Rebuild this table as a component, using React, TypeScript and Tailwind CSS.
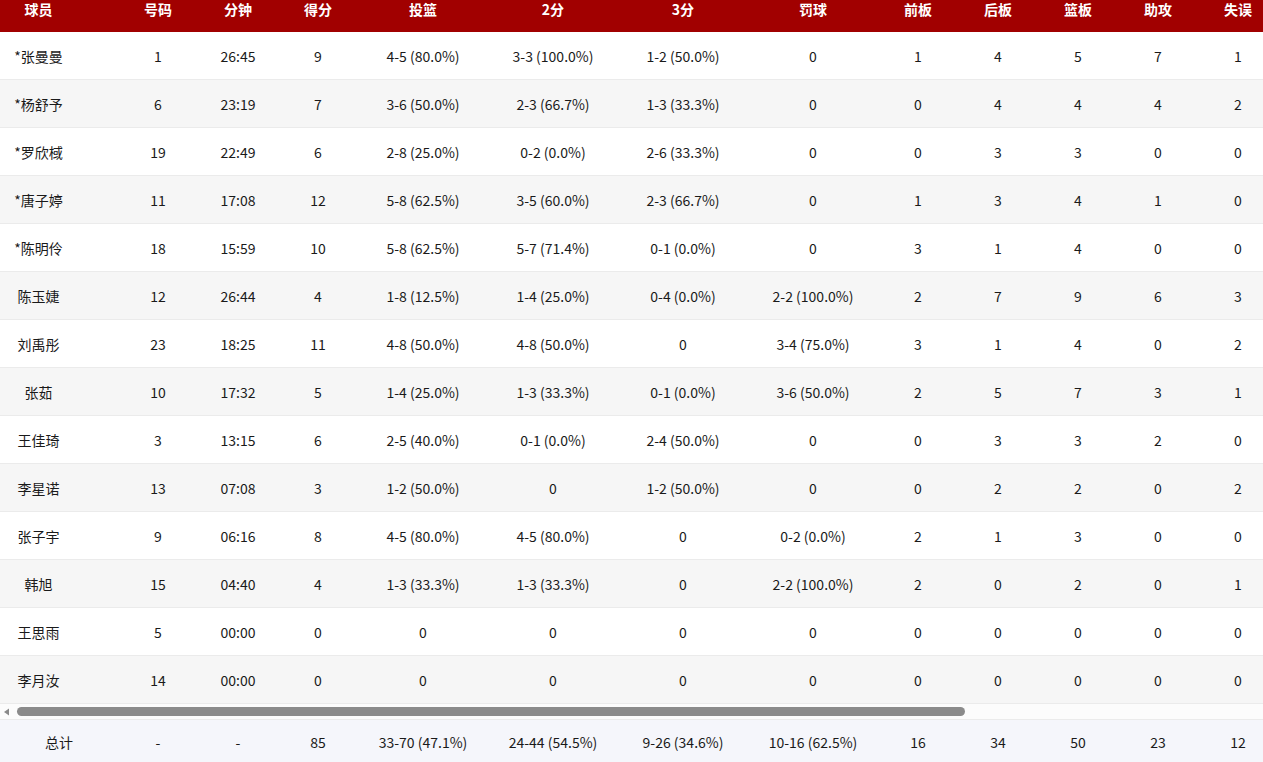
import React from "react";

const cols = [
  { key: "球员", w: "w-[118px] pr-[41px]" },
  { key: "号码", w: "w-[80px]" },
  { key: "分钟", w: "w-[80px]" },
  { key: "得分", w: "w-[80px]" },
  { key: "投篮", w: "w-[130px]" },
  { key: "2分", w: "w-[130px]" },
  { key: "3分", w: "w-[130px]" },
  { key: "罚球", w: "w-[130px]" },
  { key: "前板", w: "w-[80px]" },
  { key: "后板", w: "w-[80px]" },
  { key: "篮板", w: "w-[80px]" },
  { key: "助攻", w: "w-[80px]" },
  { key: "失误", w: "w-[80px]" },
  { key: "抢断", w: "w-[80px]" },
  { key: "盖帽", w: "w-[80px]" },
  { key: "犯规", w: "w-[80px]" },
  { key: "被犯", w: "w-[80px]" },
  { key: "正负值", w: "w-[90px]" },
];

const rows: string[][] = [
  ["*张曼曼", "1", "26:45", "9", "4-5 (80.0%)", "3-3 (100.0%)", "1-2 (50.0%)", "0", "1", "4", "5", "7", "1", "1", "0", "2", "1", "8"],
  ["*杨舒予", "6", "23:19", "7", "3-6 (50.0%)", "2-3 (66.7%)", "1-3 (33.3%)", "0", "0", "4", "4", "4", "2", "0", "0", "1", "0", "5"],
  ["*罗欣棫", "19", "22:49", "6", "2-8 (25.0%)", "0-2 (0.0%)", "2-6 (33.3%)", "0", "0", "3", "3", "0", "0", "1", "1", "2", "0", "3"],
  ["*唐子婷", "11", "17:08", "12", "5-8 (62.5%)", "3-5 (60.0%)", "2-3 (66.7%)", "0", "1", "3", "4", "1", "0", "0", "0", "1", "0", "6"],
  ["*陈明伶", "18", "15:59", "10", "5-8 (62.5%)", "5-7 (71.4%)", "0-1 (0.0%)", "0", "3", "1", "4", "0", "0", "1", "0", "3", "1", "4"],
  ["陈玉婕", "12", "26:44", "4", "1-8 (12.5%)", "1-4 (25.0%)", "0-4 (0.0%)", "2-2 (100.0%)", "2", "7", "9", "6", "3", "2", "1", "2", "2", "7"],
  ["刘禹彤", "23", "18:25", "11", "4-8 (50.0%)", "4-8 (50.0%)", "0", "3-4 (75.0%)", "3", "1", "4", "0", "2", "0", "1", "2", "3", "2"],
  ["张茹", "10", "17:32", "5", "1-4 (25.0%)", "1-3 (33.3%)", "0-1 (0.0%)", "3-6 (50.0%)", "2", "5", "7", "3", "1", "1", "0", "1", "2", "5"],
  ["王佳琦", "3", "13:15", "6", "2-5 (40.0%)", "0-1 (0.0%)", "2-4 (50.0%)", "0", "0", "3", "3", "2", "0", "0", "0", "1", "0", "1"],
  ["李星诺", "13", "07:08", "3", "1-2 (50.0%)", "0", "1-2 (50.0%)", "0", "0", "2", "2", "0", "2", "0", "0", "0", "0", "-2"],
  ["张子宇", "9", "06:16", "8", "4-5 (80.0%)", "4-5 (80.0%)", "0", "0-2 (0.0%)", "2", "1", "3", "0", "0", "0", "1", "1", "1", "3"],
  ["韩旭", "15", "04:40", "4", "1-3 (33.3%)", "1-3 (33.3%)", "0", "2-2 (100.0%)", "2", "0", "2", "0", "1", "0", "0", "2", "1", "1"],
  ["王思雨", "5", "00:00", "0", "0", "0", "0", "0", "0", "0", "0", "0", "0", "0", "0", "0", "0", "0"],
  ["李月汝", "14", "00:00", "0", "0", "0", "0", "0", "0", "0", "0", "0", "0", "0", "0", "0", "0", "0"],
];

const total = ["总计", "-", "-", "85", "33-70 (47.1%)", "24-44 (54.5%)", "9-26 (34.6%)", "10-16 (62.5%)", "16", "34", "50", "23", "12", "5", "3", "17", "11", "-"];

export default function App() {
  return (
    <div
      className="w-[1263px] h-[762px] overflow-hidden bg-white text-[14px] text-[#1a1a1a]"
      style={{ fontFamily: '"Noto Sans CJK SC", "Noto Sans", sans-serif' }}
    >
      <div className="overflow-hidden w-[1263px]">
        <div className="w-max">
          <div className="flex h-[32px] bg-[#a10000] text-white font-bold">
            {cols.map((c) => (
              <div key={c.key} className={`${c.w} shrink-0 text-center leading-[18px]`}>
                {c.key}
              </div>
            ))}
          </div>
          {rows.map((r, i) => (
            <div
              key={i}
              className={`flex h-[48px] items-center pt-[1px] border-b border-[#ebebeb] ${i % 2 === 1 ? "bg-[#f6f6f6]" : "bg-white"}`}
            >
              {r.map((v, j) => (
                <div key={j} className={`${cols[j].w} shrink-0 text-center`}>
                  {v}
                </div>
              ))}
            </div>
          ))}
        </div>
      </div>
      <div className="flex h-[16px] items-center bg-[#fcfcfc] border-b border-[#ebebeb]">
        <svg width="12" height="14" viewBox="0 0 12 14" className="shrink-0">
          <polygon points="4,7 9,3.5 9,10.5" fill="#8a8a8a" />
        </svg>
        <div className="ml-[5px] h-[9px] w-[948px] rounded-full bg-[#8b8b8b]" />
      </div>
      <div className="overflow-hidden w-[1263px]">
        <div className="flex w-max h-[44px] items-center bg-[#f5f6fb]">
          {total.map((v, j) => (
            <div key={j} className={`${j === 0 ? "w-[118px]" : cols[j].w} shrink-0 text-center`}>
              {v}
            </div>
          ))}
        </div>
      </div>
    </div>
  );
}
